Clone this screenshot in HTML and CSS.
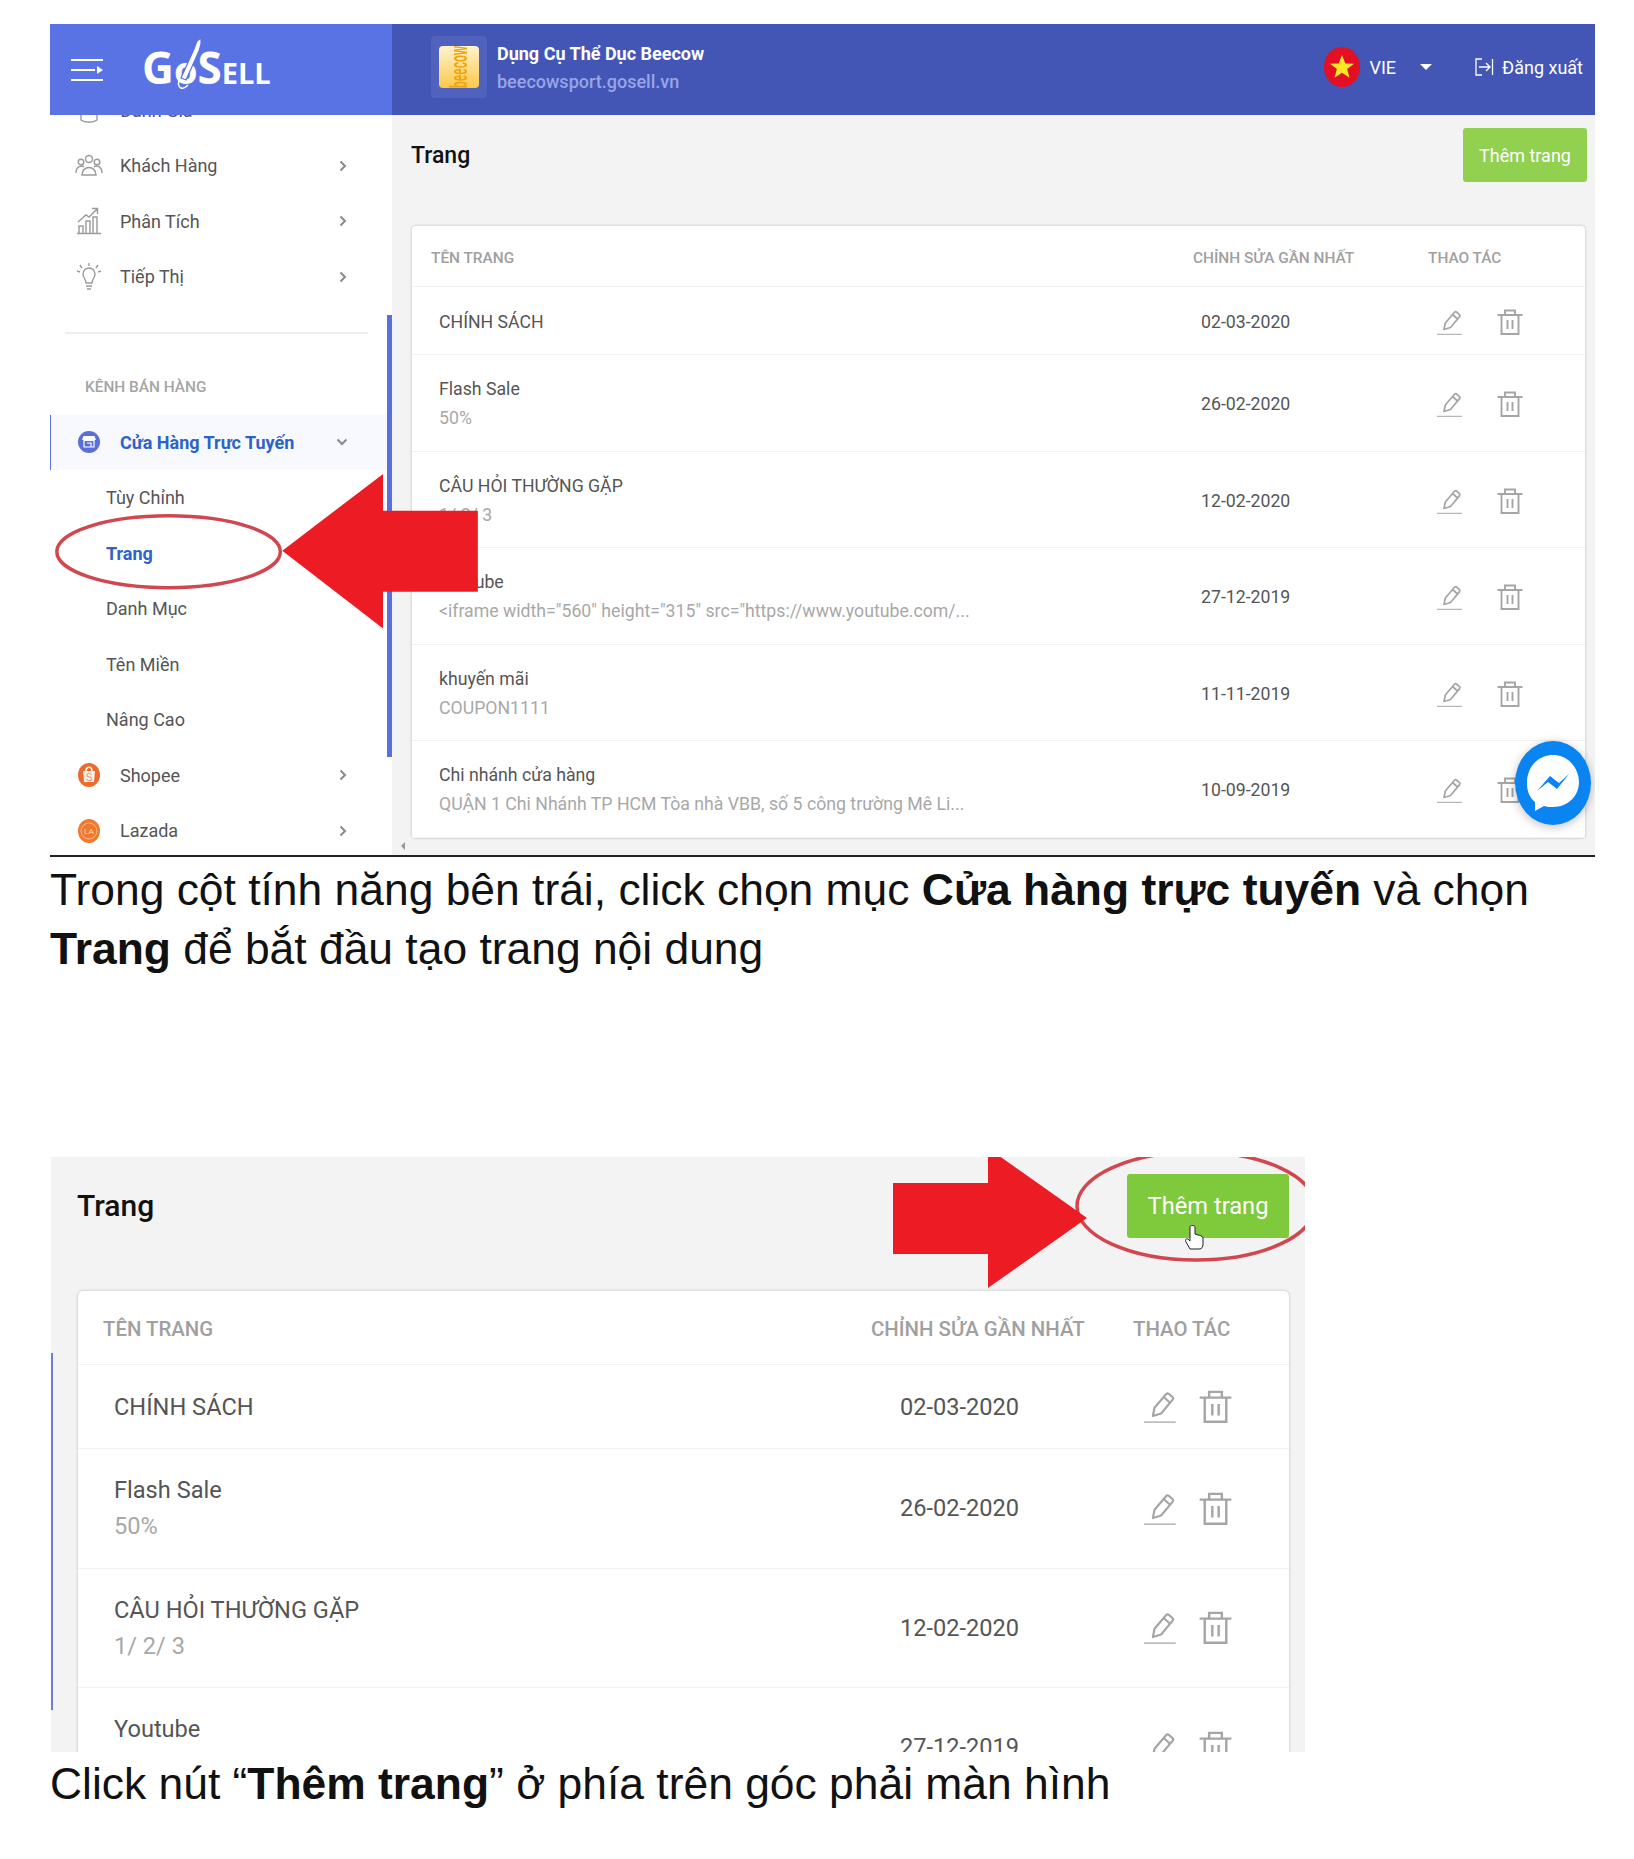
FILE: index.html
```html
<!DOCTYPE html>
<html lang="vi">
<head>
  <meta charset="UTF-8"/>
  <title>Tạo trang nội dung</title>
  <link rel="stylesheet" href="styles.css">
</head>
<body>
  <svg class="sprites" width="0" height="0">
    <symbol id="ico-edit" viewBox="0 0 26 26">
      <path d="M7 20.500l1.300-6.500L17.500 3.200a1.500 1.500 0 0 1 2-.2l3 2.600a1.500 1.500 0 0 1 .1 2L13.500 18.500z M15.500 5.500l5 4.500" fill="none" stroke="currentColor" stroke-width="1.700" stroke-linejoin="round"/>
      <path d="M0 25.300h25" fill="none" stroke="currentColor" stroke-width="1"/>
    </symbol>
    <symbol id="ico-trash" viewBox="0 0 26 26">
      <path d="M.5 6h25M8 6V1.500h10V6M4.500 6V25h17V6M10.500 11v9M15.500 11v9" fill="none" stroke="currentColor" stroke-width="1.900"/>
    </symbol>
    <symbol id="ico-chev" viewBox="0 0 8 12">
      <path d="M1.500 1.500L6 6l-4.500 4.500" fill="none" stroke="currentColor" stroke-width="2"/>
    </symbol>
  </svg>

  <!-- first screenshot -->
  <div class="shot shot-admin">
    <header class="topbar">
      <div class="brand">
        <svg class="burger" viewBox="0 0 32 24" width="32" height="24">
          <path d="M0 2h32M0 12h24M0 22h32" stroke="#fff" stroke-width="2"/>
          <path d="M26 8l6 4-6 4z" fill="#fff"/>
        </svg>
        <div class="logo">
          <span>G</span><span class="logo-o">o</span><span>S</span><span class="logo-small">ELL</span>
          <svg class="logo-rocket" viewBox="0 0 30 56" width="30" height="56">
            <path d="M8 42L21 13l3-8 4-3 0 6-2 7-13 29z" fill="#fff" stroke="#5a73e4" stroke-width="1.200"/>
            <path d="M6 44c-2 8 3 11 9 5" fill="none" stroke="#fff" stroke-width="1.500"/>
          </svg>
        </div>
      </div>
      <div class="topbar-main">
        <div class="store">
          <div class="store-thumb"><div class="store-img"><span>beecow</span></div></div>
          <div class="store-text">
            <div class="store-name">Dụng Cụ Thể Dục Beecow</div>
            <div class="store-url">beecowsport.gosell.vn</div>
          </div>
        </div>
        <div class="lang">
          <svg viewBox="0 0 36 40" width="36" height="40">
            <ellipse cx="18" cy="20" rx="18" ry="20" fill="#e30f24"/>
            <path d="M18 8l3.300 8.500 8.700.3-6.900 5.300 2.400 8.600-7.500-5-7.500 5 2.400-8.600-6.900-5.300 8.700-.3z" fill="#fde725"/>
          </svg>
          <span>VIE</span>
          <i class="caret"></i>
        </div>
        <div class="logout">
          <svg viewBox="0 0 20 20" width="20" height="20">
            <path d="M8 2H2v16h6M5 10h11M12 6l4 4-4 4M18.500 2v16" fill="none" stroke="#fff" stroke-width="1.300"/>
          </svg>
          <span>Đăng xuất</span>
        </div>
      </div>
    </header>

    <div class="admin-body">
      <aside class="sidebar">
        <div class="nav-item nav-hidden">
          <svg class="nav-ico" viewBox="0 0 28 28"><path d="M5 6h18l2 5c0 2-3 3-4 1-1 2-5 2-7 0-2 2-6 2-7 0-1 2-4 1-4-1zM6 14v10c4 3 12 3 16 0V14" fill="none" stroke="#9a9a9a" stroke-width="1.400"/></svg>
          <span class="nav-label">Đánh Giá</span>
        </div>
        <div class="nav-item">
          <svg class="nav-ico" viewBox="0 0 28 28"><circle cx="14" cy="7" r="3.500" fill="none" stroke="#9a9a9a" stroke-width="1.400"/><circle cx="6" cy="10" r="2.800" fill="none" stroke="#9a9a9a" stroke-width="1.400"/><circle cx="22" cy="10" r="2.800" fill="none" stroke="#9a9a9a" stroke-width="1.400"/><path d="M1 21c0-7 6-8 8-6M27 21c0-7-6-8-8-6M7 23c0-10 14-10 14 0z" fill="none" stroke="#9a9a9a" stroke-width="1.400"/></svg>
          <span class="nav-label">Khách Hàng</span>
          <svg class="chev"><use href="#ico-chev"/></svg>
        </div>
        <div class="nav-item">
          <svg class="nav-ico" viewBox="0 0 28 28"><path d="M2 26.500h24M4 26v-7h4v7M11 26V14h4v12M18 26V10h4v16M3 15L11 8l3 2 8-8M17 1.500h5.500V7" fill="none" stroke="#9a9a9a" stroke-width="1.400"/></svg>
          <span class="nav-label">Phân Tích</span>
          <svg class="chev"><use href="#ico-chev"/></svg>
        </div>
        <div class="nav-item">
          <svg class="nav-ico" viewBox="0 0 28 28"><path d="M11 20c0-4-3-5-3-9a6 6 0 0 1 12 0c0 4-3 5-3 9zM11 23h6M12 26h4M14 0v3M5 2l2 3M23 2l-2 3M2 8l3 1M26 8l-3 1" fill="none" stroke="#9a9a9a" stroke-width="1.400"/></svg>
          <span class="nav-label">Tiếp Thị</span>
          <svg class="chev"><use href="#ico-chev"/></svg>
        </div>

        <hr class="nav-rule">
        <div class="nav-heading">KÊNH BÁN HÀNG</div>

        <div class="nav-item is-open">
          <svg class="nav-ico" viewBox="0 0 28 28"><circle cx="14" cy="14" r="11" fill="#5a6fd8"/><path d="M8.500 8h11l1.500 4H7z" fill="#fff"/><path d="M9 12.500h10V19H9zM12 15h4v4" fill="none" stroke="#fff" stroke-width="1.200"/></svg>
          <span class="nav-label">Cửa Hàng Trực Tuyến</span>
          <svg class="chev chev-down"><use href="#ico-chev"/></svg>
        </div>
        <div class="nav-sub">Tùy Chỉnh</div>
        <div class="nav-sub is-active">Trang</div>
        <div class="nav-sub">Danh Mục</div>
        <div class="nav-sub">Tên Miền</div>
        <div class="nav-sub">Nâng Cao</div>

        <div class="nav-item">
          <svg class="nav-ico" viewBox="0 0 28 28"><ellipse cx="14" cy="14" rx="11" ry="12" fill="#ee6a2c"/><path d="M8 10h12l-1 11H9z" fill="#f9efe8"/><path d="M11 10c0-5 6-5 6 0" fill="none" stroke="#fff" stroke-width="1.500"/><text x="14" y="19.500" class="mini-s">S</text></svg>
          <span class="nav-label">Shopee</span>
          <svg class="chev"><use href="#ico-chev"/></svg>
        </div>
        <div class="nav-item">
          <svg class="nav-ico" viewBox="0 0 28 28"><ellipse cx="14" cy="14" rx="11" ry="12" fill="#f0792b"/><circle cx="14" cy="14" r="8" fill="none" stroke="#f8c9a8" stroke-width=".8"/><text x="14" y="17" class="mini-la">LA</text></svg>
          <span class="nav-label">Lazada</span>
          <svg class="chev"><use href="#ico-chev"/></svg>
        </div>
        <div class="sidebar-thumb"></div>
      </aside>

      <main class="page-area">
        <div class="page-head">
          <h2 class="page-title">Trang</h2>
          <button class="btn-add">Thêm trang</button>
        </div>
        <div class="card">
          <div class="row row-head">
            <div class="col-name">TÊN TRANG</div>
            <div class="col-date">CHỈNH SỬA GẦN NHẤT</div>
            <div class="col-act">THAO TÁC</div>
          </div>
          <div class="row row-first">
            <div class="col-name"><div class="name">CHÍNH SÁCH</div></div>
            <div class="col-date"><span class="date">02-03-2020</span></div>
            <div class="col-act"><svg class="i-edit"><use href="#ico-edit"/></svg><svg class="i-trash"><use href="#ico-trash"/></svg></div>
          </div>
          <div class="row">
            <div class="col-name"><div class="name">Flash Sale</div><div class="sub">50%</div></div>
            <div class="col-date"><span class="date">26-02-2020</span></div>
            <div class="col-act"><svg class="i-edit"><use href="#ico-edit"/></svg><svg class="i-trash"><use href="#ico-trash"/></svg></div>
          </div>
          <div class="row">
            <div class="col-name"><div class="name">CÂU HỎI THƯỜNG GẶP</div><div class="sub">1/ 2/ 3</div></div>
            <div class="col-date"><span class="date">12-02-2020</span></div>
            <div class="col-act"><svg class="i-edit"><use href="#ico-edit"/></svg><svg class="i-trash"><use href="#ico-trash"/></svg></div>
          </div>
          <div class="row">
            <div class="col-name"><div class="name">Youtube</div><div class="sub">&lt;iframe width="560" height="315" src="https://www.youtube.com/...</div></div>
            <div class="col-date"><span class="date">27-12-2019</span></div>
            <div class="col-act"><svg class="i-edit"><use href="#ico-edit"/></svg><svg class="i-trash"><use href="#ico-trash"/></svg></div>
          </div>
          <div class="row">
            <div class="col-name"><div class="name">khuyến mãi</div><div class="sub">COUPON1111</div></div>
            <div class="col-date"><span class="date">11-11-2019</span></div>
            <div class="col-act"><svg class="i-edit"><use href="#ico-edit"/></svg><svg class="i-trash"><use href="#ico-trash"/></svg></div>
          </div>
          <div class="row">
            <div class="col-name"><div class="name">Chi nhánh cửa hàng</div><div class="sub">QUẬN 1 Chi Nhánh TP HCM Tòa nhà VBB, số 5 công trường Mê Li...</div></div>
            <div class="col-date"><span class="date">10-09-2019</span></div>
            <div class="col-act"><svg class="i-edit"><use href="#ico-edit"/></svg><svg class="i-trash"><use href="#ico-trash"/></svg></div>
          </div>
        </div>
      </main>
    </div>

    <!-- annotations on top of the screenshot -->
    <svg class="overlay" viewBox="0 0 1545 833">
      <ellipse cx="117" cy="529" rx="112" ry="36" fill="none" stroke="#d0474f" stroke-width="3.500"/>
      <path d="M231 528L332 451V488H427V569H332V606z" fill="#ed1c24"/>
      <path d="M354 820l-4 4 4 4z" fill="#999"/>
    </svg>
    <div class="messenger">
      <svg viewBox="0 0 76 84" width="76" height="84">
        <ellipse cx="38" cy="42" rx="38" ry="42" fill="#0a84f0"/>
        <path d="M38 14c-15 0-26 12-26 28 0 9 3 15 8 19v9l9-5c3 1 6 1 9 1 15 0 26-11 26-25s-11-27-26-27z" fill="#fff"/>
        <path d="M22 50l13-15 9 7 10-9-12 15-9-7z" fill="#0a84f0"/>
      </svg>
    </div>
  </div>

  <p class="caption caption-first">Trong cột tính năng bên trái, click chọn mục <b>Cửa hàng trực tuyến</b> và chọn <b>Trang</b> để bắt đầu tạo trang nội dung</p>

  <!-- second screenshot, zoomed in on the same page -->
  <div class="shot shot-zoom">
    <div class="zoom-head">
      <h2 class="zoom-title">Trang</h2>
      <button class="zoom-btn">Thêm trang</button>
    </div>
    <div class="zoom-card">
      <div class="zrow zrow-head">
        <div class="zcol-name">TÊN TRANG</div>
        <div class="zcol-date">CHỈNH SỬA GẦN NHẤT</div>
        <div class="zcol-act">THAO TÁC</div>
      </div>
      <div class="zrow zrow-first">
        <div class="zcol-name"><div class="zname">CHÍNH SÁCH</div></div>
        <div class="zcol-date"><span class="zdate">02-03-2020</span></div>
        <div class="zcol-act"><svg class="z-edit"><use href="#ico-edit"/></svg><svg class="z-trash"><use href="#ico-trash"/></svg></div>
      </div>
      <div class="zrow">
        <div class="zcol-name"><div class="zname">Flash Sale</div><div class="zsub">50%</div></div>
        <div class="zcol-date"><span class="zdate">26-02-2020</span></div>
        <div class="zcol-act"><svg class="z-edit"><use href="#ico-edit"/></svg><svg class="z-trash"><use href="#ico-trash"/></svg></div>
      </div>
      <div class="zrow">
        <div class="zcol-name"><div class="zname">CÂU HỎI THƯỜNG GẶP</div><div class="zsub">1/ 2/ 3</div></div>
        <div class="zcol-date"><span class="zdate">12-02-2020</span></div>
        <div class="zcol-act"><svg class="z-edit"><use href="#ico-edit"/></svg><svg class="z-trash"><use href="#ico-trash"/></svg></div>
      </div>
      <div class="zrow">
        <div class="zcol-name"><div class="zname">Youtube</div><div class="zsub">&nbsp;</div></div>
        <div class="zcol-date"><span class="zdate">27-12-2019</span></div>
        <div class="zcol-act"><svg class="z-edit"><use href="#ico-edit"/></svg><svg class="z-trash"><use href="#ico-trash"/></svg></div>
      </div>
    </div>
    <div class="zoom-rail"></div>
    <svg class="overlay" viewBox="0 0 1254 595">
      <ellipse cx="1145" cy="49" rx="119" ry="54" fill="none" stroke="#d0474f" stroke-width="3.500"/>
      <path d="M842 26H937V-9L1036 61L937 131V97H842z" fill="#ed1c24"/>
      <path d="M1139 70v14l-2-2c-2-1-3 1-2 3l4 7h9c3 0 4-2 4-5v-6c0-2-4-3-5-3l-3-1v-7c0-2-5-2-5 0z" fill="#fff" stroke="#222" stroke-width="1"/>
    </svg>
  </div>

  <p class="caption caption-last">Click nút “<b>Thêm trang</b>” ở phía trên góc phải màn hình</p>
</body>
</html>
```

FILE: styles.css
```css
html, body {
  margin: 0;
  padding: 0;
  background: #fff;
}

body {
  padding: 24px 0 0 50px;
  font-family: "Liberation Sans", Arial, sans-serif;
  color: #111;
  overflow: hidden;
  height: 1859px;
  box-sizing: border-box;
}

.sprites {
  position: absolute;
}

.shot {
  position: relative;
  overflow: hidden;
  font-family: Roboto, sans-serif;
}

.overlay {
  position: absolute;
  top: 0;
  left: 0;
  width: 100%;
  height: 100%;
  overflow: hidden;
  pointer-events: none;
}

/* first screenshot */
.shot-admin {
  width: 1545px;
  height: 833px;
  background: #f3f3f3;
  border-bottom: 2px solid #222;
  box-sizing: border-box;
}

.topbar {
  position: relative;
  z-index: 1;
  display: flex;
  height: 91px;
  color: #fff;
}

.brand {
  width: 342px;
  background: #5a73e4;
  display: flex;
  align-items: center;
  padding-left: 21px;
  box-sizing: border-box;
}

.logo {
  position: relative;
  display: flex;
  align-items: baseline;
  margin-left: 39px;
  font-family: "Open Sans", sans-serif;
  font-weight: 700;
  font-size: 44px;
  line-height: 50px;
}

.logo-o {
  font-size: 38px;
  margin: 0;
}

.logo-small {
  font-size: 29px;
}

.logo-rocket {
  position: absolute;
  top: -6px;
  left: 31px;
}

.topbar-main {
  flex: 1;
  background: #4355b5;
  display: flex;
  align-items: center;
  padding: 0 12px 5px 39px;
}

.store {
  display: flex;
  align-items: center;
  gap: 9px;
  flex: 1;
}

.store-thumb {
  width: 56px;
  height: 62px;
  border-radius: 4px;
  background: #5062bb;
  display: flex;
  align-items: center;
  justify-content: center;
}

.store-img {
  width: 40px;
  height: 42px;
  border-radius: 4px;
  background: linear-gradient(#fff3cf, #fbc84a);
  display: flex;
  align-items: center;
  justify-content: center;
}

.store-img span {
  display: block;
  writing-mode: vertical-rl;
  transform: rotate(180deg) scaleX(2.100);
  font: 700 11.500px/18px "Liberation Sans", sans-serif;
  color: #f0a30a;
}

.store-text {
  margin: 2px 0 0 1px;
}

.store-name {
  font-size: 18px;
  font-weight: 700;
  line-height: 28px;
}

.store-url {
  font-size: 18px;
  font-weight: 500;
  line-height: 28px;
  color: #98a5e6;
}

.lang {
  display: flex;
  align-items: center;
  font-size: 18px;
}

.lang span {
  margin-left: 9px;
}

.caret {
  width: 0;
  height: 0;
  border: 6px solid transparent;
  border-top: 6px solid #fff;
  border-bottom: 0;
  margin-left: 24px;
}

.logout {
  display: flex;
  align-items: center;
  gap: 8px;
  font-size: 18px;
  margin-left: 42px;
}

.admin-body {
  display: flex;
  height: 740px;
}

.sidebar {
  position: relative;
  width: 342px;
  flex: none;
  background: #fff;
  padding-top: 23px;
  box-sizing: border-box;
  color: #555;
  font-size: 18px;
}

.nav-item {
  display: flex;
  align-items: center;
  height: 55.500px;
  padding-left: 25px;
  box-sizing: border-box;
}

.nav-hidden {
  margin-top: -55.500px;
}

.nav-ico {
  width: 28px;
  height: 28px;
  flex: none;
}

.mini-s {
  font: 400 10px "Liberation Sans", sans-serif;
  fill: #e9926a;
  text-anchor: middle;
}

.mini-la {
  font: 400 8px "Liberation Sans", sans-serif;
  fill: #fbd9c2;
  text-anchor: middle;
}

.nav-label {
  margin-left: 17px;
  flex: 1;
}

.chev {
  width: 8px;
  height: 12px;
  color: #8a8a8a;
  margin-right: 45px;
}

.chev-down {
  transform: rotate(90deg);
  margin-right: 41px;
}

.nav-rule {
  margin: 27px 24px 0 15px;
  border: 0;
  border-top: 2px solid #eee;
}

.nav-heading {
  margin-top: 39px;
  padding-left: 35px;
  height: 28px;
  line-height: 28px;
  font-size: 15.400px;
  font-weight: 500;
  color: #a5a5a5;
}

.nav-item.is-open {
  margin-top: 14px;
  background: #f7f9fe;
  border-left: 1px solid #5a73e4;
  padding-left: 24px;
  color: #2e62c9;
  font-weight: 700;
  margin-right: 5px;
}

.nav-sub {
  height: 55.500px;
  line-height: 55.500px;
  padding-left: 56px;
}

.nav-sub.is-active {
  color: #2e62c9;
  font-weight: 700;
}

.sidebar-thumb {
  position: absolute;
  right: 0;
  top: 200px;
  width: 5px;
  height: 442px;
  background: #5a6fdc;
}

.page-area {
  flex: 1;
  min-width: 0;
  padding: 0 8px 0 20px;
}

.page-head {
  display: flex;
  justify-content: space-between;
  align-items: flex-start;
  height: 111px;
  padding-top: 13px;
  box-sizing: border-box;
}

.page-title {
  margin: 11px 0 0 -1px;
  font-size: 23px;
  line-height: 34px;
  font-weight: 500;
  color: #111;
}

.btn-add {
  width: 124px;
  height: 54px;
  border: 0;
  border-radius: 3px;
  background: #92d050;
  color: #fff;
  font: 400 18px Roboto, sans-serif;
}

.card {
  width: 1173px;
  height: 612px;
  box-sizing: border-box;
  background: #fff;
  border-radius: 4px;
  box-shadow: 0 0 3px rgba(0, 0, 0, 0.25);
}

.row {
  display: flex;
  align-items: center;
  height: 96.500px;
  padding-top: 3px;
  border-bottom: 1px solid #f2f2f2;
  box-sizing: border-box;
  font-size: 17.700px;
  color: #555;
}

.row-head {
  height: 61px;
  font-size: 15.400px;
  font-weight: 500;
  color: #a0a0a0;
}

.row-first {
  height: 68px;
}

.col-name {
  width: 781px;
  padding-left: 27px;
  flex: none;
  box-sizing: border-box;
}

.row-head .col-name {
  padding-left: 19px;
}

.col-date {
  width: 235px;
  flex: none;
}

.date {
  margin-left: 8px;
}

.col-act {
  display: flex;
  align-items: center;
  gap: 34px;
}

.row:not(.row-head) .col-act {
  padding-left: 9px;
}

.name {
  line-height: 29px;
}

.sub {
  color: #a8a8a8;
  line-height: 29px;
}

.i-edit, .i-trash {
  width: 26px;
  height: 26px;
  color: #a5a5a5;
}

.messenger {
  position: absolute;
  left: 1465px;
  top: 717px;
  width: 76px;
  height: 84px;
  filter: drop-shadow(0 2px 5px rgba(0, 0, 0, 0.25));
}

/* captions between the screenshots */
.caption {
  width: 1545px;
  margin: 0;
  font-size: 44.400px;
  line-height: 59px;
  color: #111;
}

.caption-first {
  margin: 3px 0 179px;
}

.caption-last {
  margin-top: 2px;
}

/* second screenshot */
.shot-zoom {
  width: 1254px;
  height: 595px;
  margin-left: 1px;
  background: #f3f3f3;
}

.zoom-head {
  display: flex;
  justify-content: space-between;
  align-items: center;
  height: 134px;
  padding: 0 16px 0 26px;
  box-sizing: border-box;
}

.zoom-title {
  margin: 0 0 37px;
  font-size: 30px;
  font-weight: 500;
  color: #111;
}

.zoom-btn {
  width: 162px;
  height: 64px;
  margin-bottom: 36px;
  border: 0;
  border-radius: 3px;
  background: #7fc93d;
  color: #fff;
  font: 400 23.700px Roboto, sans-serif;
}

.zoom-card {
  width: 1211px;
  margin-left: 27px;
  background: #fff;
  border-radius: 5px;
  box-shadow: 0 0 3px rgba(0, 0, 0, 0.25);
}

.zrow {
  display: flex;
  align-items: center;
  height: 119.500px;
  box-sizing: border-box;
  border-bottom: 1px solid #f2f2f2;
  font-size: 23.600px;
  color: #555;
}

.zrow-head {
  height: 74px;
  padding-top: 3px;
  font-size: 20.400px;
  font-weight: 500;
  color: #a0a0a0;
}

.zrow-first {
  height: 84px;
}

.zcol-name {
  width: 793px;
  padding-left: 36px;
  flex: none;
  box-sizing: border-box;
}

.zrow-head .zcol-name {
  padding-left: 25px;
}

.zcol-date {
  width: 262px;
  flex: none;
}

.zdate {
  margin-left: 29px;
}

.zcol-act {
  display: flex;
  align-items: center;
  gap: 22px;
}

.zrow:not(.zrow-head) .zcol-act {
  padding-left: 11px;
}

.zname, .zsub {
  line-height: 36px;
}

.zsub {
  color: #a8a8a8;
}

.z-edit, .z-trash {
  width: 33px;
  height: 33px;
  color: #a5a5a5;
}

.zoom-rail {
  position: absolute;
  left: 0;
  top: 196px;
  width: 2px;
  height: 357px;
  background: #6b7fd7;
}
```
